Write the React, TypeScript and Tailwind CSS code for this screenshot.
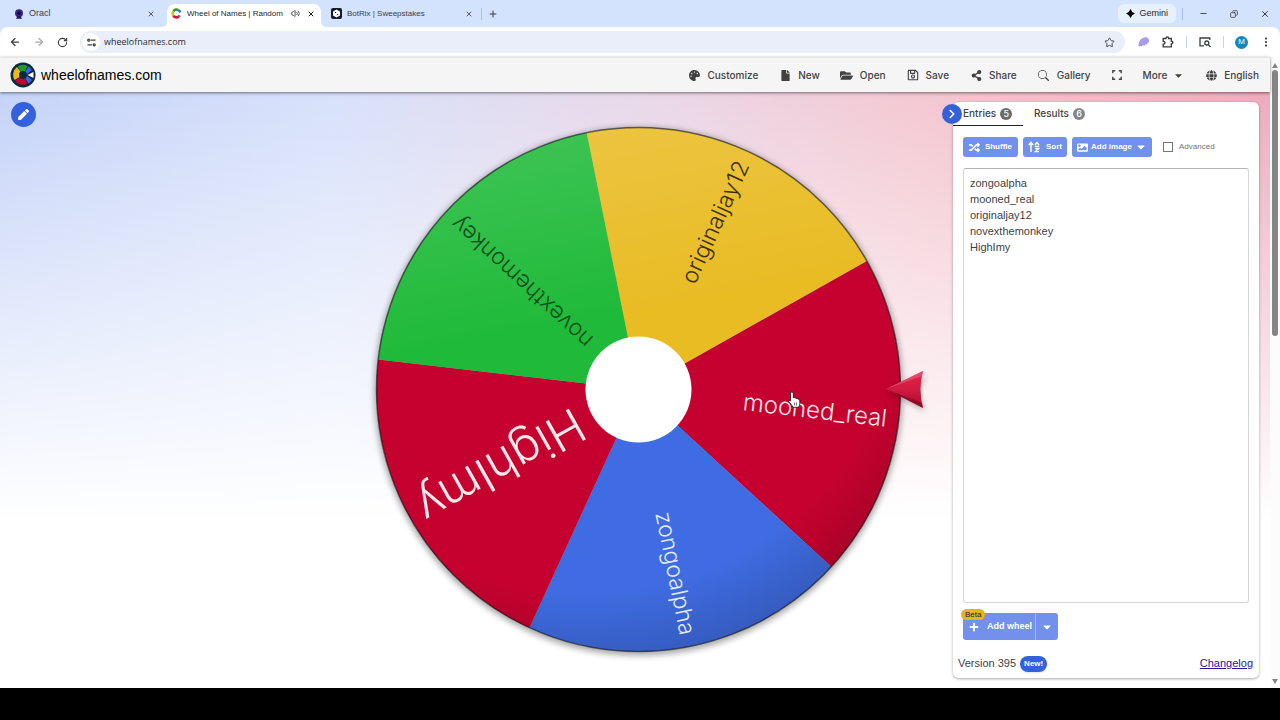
import { useState, type ReactNode } from "react";
import {
  FaCaretDown,
  FaFile,
  FaFolderOpen,
  FaGlobe,
  FaImage,
  FaPalette,
  FaPen,
  FaPlus,
  FaRandom,
  FaRegSave,
  FaShareAlt,
} from "react-icons/fa";
import { BsSearch } from "react-icons/bs";
import {
  ArrowLeft,
  ArrowRight,
  ChevronRight,
  Copy,
  EllipsisVertical,
  Minus,
  Plus,
  RotateCw,
  Star,
  Volume2,
  X,
} from "lucide-react";

const CX = 303.5;
const CY = 297.5;
const RADIUS = 262;
const SLICE = 72;
const ROTATION = -29.4;

const slices = [
  { name: "mooned_real", fill: "#c5022f", ink: "#ffe9e9", size: 24 },
  { name: "zongoalpha", fill: "#3f6ce2", ink: "#e4ebff", size: 23 },
  { name: "HighImy", fill: "#c5022f", ink: "#ffe9e9", size: 48 },
  { name: "novexthemonkey", fill: "#1fba39", ink: "#0d4d1a", size: 23 },
  { name: "originaljay12", fill: "#e9bc24", ink: "#3d3008", size: 23 },
];

const point = (deg: number, r: number) => {
  const rad = (deg * Math.PI) / 180;
  return `${(CX + r * Math.cos(rad)).toFixed(2)} ${(CY + r * Math.sin(rad)).toFixed(2)}`;
};

const Wheel = () => (
  <svg
    viewBox="0 0 600 596"
    className="block w-[600px] shrink"
    role="img"
    aria-label="Wheel"
  >
    <defs>
      <linearGradient id="shine" x1="0.3" y1="0" x2="0.5" y2="1">
        <stop offset="0" stopColor="#fff" stopOpacity="0.14" />
        <stop offset="0.38" stopColor="#fff" stopOpacity="0" />
      </linearGradient>
      <radialGradient id="shade" cx="0.4" cy="0.28" r="0.78">
        <stop offset="0.78" stopColor="#000" stopOpacity="0" />
        <stop offset="1" stopColor="#000" stopOpacity="0.2" />
      </radialGradient>
      <linearGradient id="pointer" x1="0" y1="0" x2="0" y2="1">
        <stop offset="0" stopColor="#e0284e" />
        <stop offset="0.5" stopColor="#d01a40" />
        <stop offset="1" stopColor="#a50c2b" />
      </linearGradient>
      <filter id="soft" x="-10%" y="-10%" width="120%" height="120%">
        <feGaussianBlur stdDeviation="3" />
      </filter>
    </defs>

    <circle cx={CX} cy={CY + 2} r={RADIUS + 2} fill="#000" opacity="0.35" filter="url(#soft)" />
    {slices.map((slice, i) => {
      const start = ROTATION + i * SLICE;
      return (
        <path
          key={slice.name}
          d={`M${CX} ${CY} L${point(start, RADIUS)} A${RADIUS} ${RADIUS} 0 0 1 ${point(start + SLICE, RADIUS)} Z`}
          fill={slice.fill}
        />
      );
    })}
    <circle cx={CX} cy={CY} r={RADIUS} fill="url(#shine)" />
    <circle cx={CX} cy={CY} r={RADIUS} fill="url(#shade)" />
    <circle cx={CX} cy={CY} r={RADIUS} fill="none" stroke="#000" strokeOpacity="0.55" strokeWidth="1.5" />
    {slices.map((slice, i) => (
      <text
        key={slice.name}
        x={CX + 250}
        y={CY}
        textAnchor="end"
        dominantBaseline="central"
        fontSize={slice.size}
        fill={slice.ink}
        transform={`rotate(${ROTATION + (i + 0.5) * SLICE} ${CX} ${CY})`}
        className="font-light [font-family:'Inter','Liberation_Sans',sans-serif]"
      >
        {slice.name}
      </text>
    ))}
    <circle cx={CX} cy={CY} r="53" fill="#fff" />

    {/* pointer */}
    <path d="M553 299 L590 283 L583 300 L590 319 Z" fill="#000" opacity="0.3" filter="url(#soft)" />
    <path d="M551 297 L588 279 Q583 297 588 316 Z" fill="url(#pointer)" />
    <path d="M551 297 L588 279 L587 284 Z" fill="#f06a85" opacity="0.5" />
    <path d="M551 297 L588 316 L587 311 Z" fill="#7d0620" opacity="0.6" />

    {/* hand cursor */}
    <path
      d="M455.500 300.500 q1.500 -1.200 2.800 0.300 v5 q2 -0.800 2.300 0.500 q1.800 -0.500 2.200 0.800 q2 -0.300 2 1.700 v3 q0 2 -1.200 3.500 h-5.500 q-1.500 -3 -4.500 -5.500 q0 -2.200 1.900 -1 Z"
      fill="#fff"
      stroke="#111"
      strokeWidth="0.8"
    />
    <path d="M459.500 310.500 v3 M461.500 310.500 v3" stroke="#111" strokeWidth="0.6" />
  </svg>
);

const Logo = () => (
  <svg viewBox="0 0 26 26" className="size-[26px]" aria-hidden="true">
    <circle cx="13" cy="13" r="12.500" fill="#0c2a3e" />
    <path d="M13 13 L7.500 4.500 A10 10 0 0 1 17.500 4 Z" fill="#17a02f" />
    <path d="M13 13 L4.500 18 A10 10 0 0 1 7 5 Z" fill="#edb916" />
    <path d="M13 13 L17.500 21.800 A10 10 0 0 1 5 18.700 Z" fill="#c5022f" />
    <path d="M13 13 L18.500 4.500 Q20.500 5.500 22 8 L16 13 L22 18 Q20.500 20.500 18.500 21.500 Z" fill="#3369e8" />
    <circle cx="13" cy="13" r="4" fill="#0c2a3e" />
    <path d="M17.500 13 L23.500 10 V16 Z" fill="#fff" />
  </svg>
);

const FullscreenIcon = () => (
  <svg viewBox="0 0 10 10" className="size-[10px]" fill="none" stroke="currentColor" strokeWidth="1.400">
    <path d="M0.800 3.200 V0.800 H3.200 M6.800 0.800 H9.200 V3.200 M9.200 6.800 V9.200 H6.800 M3.200 9.200 H0.800 V6.800" />
  </svg>
);

// two arrows up, with the a/z bars to their right
const SortIcon = () => (
  <svg viewBox="0 0 12 12" className="size-3" fill="none" stroke="currentColor" strokeWidth="1.500" aria-hidden="true">
    <path d="M3 11 V2 M0.800 4 L3 1.500 L5.200 4" />
    <path d="M7 4 L9 1.600 L11 4 M6.800 5.600 H11.200" strokeWidth="1.500" />
    <path d="M7.200 7.600 H10.600 L7.400 10.600 H11" strokeWidth="1.400" />
  </svg>
);

const NavItem = ({ icon, label }: { icon: ReactNode; label: string }) => (
  <button className="flex items-center gap-[7px]">
    <span className="flex w-3 justify-center">{icon}</span>
    {label}
  </button>
);

// curved foot on either side of the active browser tab
const TabFoot = ({ side }: { side: "left" | "right" }) => (
  <svg
    viewBox="0 0 6 6"
    className={side === "left" ? "absolute bottom-0 -left-1.5 size-1.5" : "absolute bottom-0 -right-1.5 size-1.5"}
    aria-hidden="true"
  >
    <path d={side === "left" ? "M6 0 V6 H0 Q6 6 6 0 Z" : "M0 0 V6 H6 Q0 6 0 0 Z"} fill="#fff" />
  </svg>
);

const BrowserChrome = () => (
  <header className="bg-[#d3e2fd] text-[#3c4043]">
    <div className="flex h-[27px] items-center">
      <div className="flex w-[167px] items-center gap-[5px] pr-3 pl-3.5 text-[9px]">
        <svg viewBox="0 0 10 10" className="size-[10px]" aria-hidden="true">
          <circle cx="5" cy="4.200" r="4" fill="#3b1f8f" />
          <circle cx="5" cy="4.200" r="1.800" fill="#120b33" />
          <path d="M2 9.800 L3.500 7 H6.500 L8 9.800 Z" fill="#241463" />
        </svg>
        <span className="flex-1">Oracl</span>
        <button aria-label="Close tab"><X className="size-2" strokeWidth={2.5} /></button>
      </div>
      <div className="relative mt-1 flex h-[23px] w-[154px] items-center gap-[5px] rounded-t-lg bg-white pr-1.5 pb-1 pl-1 text-[#1f1f1f]">
        <TabFoot side="left" />
        <svg viewBox="0 0 12 12" className="size-[11px] shrink-0" fill="none" strokeWidth="2.800" aria-hidden="true">
          <path d="M2.600 3.600 A4.200 4.200 0 0 1 8 2.300" stroke="#17a02f" />
          <path d="M2.600 8.400 A4.200 4.200 0 0 1 2.600 3.600" stroke="#edb916" />
          <path d="M8.500 9.400 A4.200 4.200 0 0 1 2.600 8.400" stroke="#d5112f" />
          <path d="M8 2.300 L10.500 4.500 M9.600 8 L8.500 9.400" stroke="#3369e8" />
        </svg>
        <span className="flex-1 text-[8px] whitespace-nowrap">Wheel of Names | Random</span>
        <Volume2 className="size-[9px] shrink-0" />
        <button aria-label="Close tab" className="ml-0.5"><X className="size-2" strokeWidth={3} /></button>
        <TabFoot side="right" />
      </div>
      <div className="flex w-[161px] items-center gap-[5px] border-r border-[#a8c0ea] pr-2 pl-2.5 text-[8px]">
        <svg viewBox="0 0 11 11" className="size-[11px]" aria-hidden="true">
          <rect width="11" height="11" rx="2" fill="#14192b" />
          <path d="M5.500 1.500 L9 3.500 V7.500 L5.500 9.500 L2 7.500 V3.500 Z" fill="#fff" />
          <path d="M4 4 L5 5 M7 6 L6 7.200" stroke="#14192b" strokeWidth="1" />
        </svg>
        <span className="flex-1">BotRix | Sweepstakes</span>
        <button aria-label="Close tab"><X className="size-2" strokeWidth={2.5} /></button>
      </div>
      <button aria-label="New tab" className="ml-1.5"><Plus className="size-[10px]" strokeWidth={2.5} /></button>
      <div className="ml-auto flex items-center pr-2.5 text-[#1f1f1f]">
        <button className="flex h-[19px] items-center gap-1 rounded-md bg-[#e7f0fd] px-2 text-[9px] font-medium">
          <svg viewBox="0 0 10 10" className="size-[9px]" aria-hidden="true">
            <path d="M5 0 Q6.200 3.800 10 5 Q6.200 6.200 5 10 Q3.800 6.200 0 5 Q3.800 3.800 5 0 Z" />
          </svg>
          Gemini
        </button>
        <span className="mr-4 ml-1.5 h-3 w-px bg-[#a8c0ea]" />
        <div className="flex items-center gap-[22px]">
          <button aria-label="Minimize"><Minus className="size-[9px]" /></button>
          <button aria-label="Restore"><Copy className="size-2 -scale-x-100" /></button>
          <button aria-label="Close window"><X className="size-[10px]" /></button>
        </div>
      </div>
    </div>

    <div className="flex h-[30px] items-center rounded-t-lg bg-white pr-2 pl-[9px]">
      <div className="flex items-center gap-3">
        <button aria-label="Back"><ArrowLeft className="size-3" strokeWidth={2.5} /></button>
        <button aria-label="Forward" className="text-[#a9abae]"><ArrowRight className="size-3" strokeWidth={2.5} /></button>
        <button aria-label="Reload"><RotateCw className="size-[11px]" strokeWidth={2.5} /></button>
      </div>
      <div className="ml-3 flex h-[22px] flex-1 items-center rounded-full bg-[#e9eefa] pr-2.5 pl-0.5">
        <span className="flex size-[18px] items-center justify-center rounded-full bg-white">
          <svg viewBox="0 0 10 10" className="size-[9px]" fill="none" stroke="#3c4043" strokeWidth="1.400" aria-hidden="true">
            <circle cx="2" cy="2.400" r="1.200" />
            <path d="M4.500 2.400 H9.500 M0.500 7.600 H5.500" />
            <circle cx="8" cy="7.600" r="1.200" />
          </svg>
        </span>
        <input
          aria-label="Address"
          defaultValue="wheelofnames.com"
          className="ml-1 min-w-0 flex-1 bg-transparent text-[9px] text-[#2b2d30] outline-none [font-family:'Open_Sans',sans-serif]"
        />
        <button aria-label="Bookmark"><Star className="size-[11px]" strokeWidth={2} /></button>
      </div>
      <div className="flex items-center pl-[13px]">
        <svg viewBox="0 0 12 12" className="size-3" aria-hidden="true">
          <path d="M0.500 10.500 Q0.500 2 7 1.200 Q11.500 1 11 6 Q9.500 6.500 9 8.500 Q7.500 7.500 6.500 10 Q4.500 8.500 3.800 10.500 Q2 9.500 0.500 10.500 Z" fill="#a99be8" />
        </svg>
        <svg viewBox="0 0 12 12" className="ml-3 size-3" fill="none" stroke="#3c4043" strokeWidth="1.400" aria-hidden="true">
          <path d="M1.200 2.500 H4 Q4 0.900 5.300 0.900 Q6.600 0.900 6.600 2.500 H9.300 V5.300 Q10.900 5.300 10.900 6.600 Q10.900 7.900 9.300 7.900 V10.900 H1.200 V8.200 Q3 8 3 6.700 Q3 5.400 1.200 5.200 Z" />
        </svg>
        <span className="ml-3 h-3 w-px bg-[#c5d3ee]" />
        <svg viewBox="0 0 12 12" className="ml-3 size-3" fill="none" stroke="#3c4043" strokeWidth="1.300" aria-hidden="true">
          <path d="M5 9.800 H1 V2 H10.800 V4" />
          <circle cx="7.800" cy="7" r="2" />
          <path d="M9.200 8.600 L11.500 11" />
        </svg>
        <span className="ml-3 h-3 w-px bg-[#c5d3ee]" />
        <span className="ml-[11px] flex size-[13px] items-center justify-center rounded-full bg-[#1288bd] text-[8px] text-white">M</span>
        <button aria-label="Menu" className="ml-3"><EllipsisVertical className="size-3" strokeWidth={2.5} /></button>
      </div>
    </div>
  </header>
);

const entries = ["zongoalpha", "mooned_real", "originaljay12", "novexthemonkey", "HighImy"];

const toolButton =
  "flex h-5 items-center rounded-[3px] bg-[#7191ec] text-[8px] font-bold whitespace-nowrap text-white";

const EntriesPanel = () => {
  const [text, setText] = useState(entries.join("\n"));
  const [advanced, setAdvanced] = useState(false);

  return (
    <aside className="relative flex w-[306px] flex-col rounded-md bg-white shadow-[0_1px_3px_rgba(0,0,0,0.35)]">
      <button
        aria-label="Hide panel"
        className="absolute top-0.5 -left-[11px] flex size-5 items-center justify-center rounded-full bg-[#3460dc] text-white"
      >
        <ChevronRight className="size-3.5" strokeWidth={3} />
      </button>
      <div className="flex h-6 text-[10px] font-medium text-[#424242] [font-family:'Inter','Liberation_Sans',sans-serif]">
        <button className="flex w-[70px] items-center gap-1 border-b border-[#222] pl-2.5">
          Entries
          <span className="flex size-3 items-center justify-center rounded-full bg-[#6b6b6b] text-[9px] text-white">5</span>
        </button>
        <button className="flex items-center gap-1 border-b border-transparent pl-[11px]">
          Results
          <span className="flex size-3 items-center justify-center rounded-full bg-[#858585] text-[9px] text-white">6</span>
        </button>
      </div>

      <div className="flex flex-1 flex-col px-2.5 pt-[11px]">
        <div className="flex items-center gap-[5px]">
          <button className={`${toolButton} w-[55px] justify-between px-1.5`}>
            <FaRandom className="size-[11px]" />
            Shuffle
          </button>
          <button className={`${toolButton} w-11 justify-between px-[5px]`}>
            <SortIcon />
            Sort
          </button>
          <button className={`${toolButton} w-20 justify-between px-[5px]`}>
            <FaImage className="size-[11px]" />
            Add image
            <FaCaretDown className="size-3" />
          </button>
          <label className="ml-1.5 flex items-center gap-1.5 text-[8px] text-[#757575]">
            <input
              type="checkbox"
              checked={advanced}
              onChange={(e) => setAdvanced(e.target.checked)}
              className="size-[10px] appearance-none border border-[#757575] checked:bg-[#3460dc]"
            />
            Advanced
          </label>
        </div>

        <textarea
          aria-label="Entries"
          value={text}
          onChange={(e) => setText(e.target.value)}
          spellCheck={false}
          className="mt-[11px] flex-1 resize-none rounded-[3px] border border-[#d6d6d6] border-t-[#b5b5b5] px-1.5 py-1.5 text-[11px] leading-4 text-[#3f3f3f] outline-none"
        />

        <div className="relative mt-2.5 flex self-start">
          <button className="flex h-[27px] w-[73px] items-center gap-2 rounded-l-[3px] border-r border-[#a6baf3] bg-[#7191ec] pl-1.5 text-[9px] font-bold whitespace-nowrap text-white">
            <FaPlus className="size-[10px] shrink-0" />
            Add wheel
          </button>
          <button aria-label="More wheels" className="flex h-[27px] w-[22px] items-center justify-center rounded-r-[3px] bg-[#7191ec] text-white">
            <FaCaretDown className="size-3" />
          </button>
          <span className="absolute -top-1 -left-0.5 flex h-[11px] items-center rounded-full bg-[#e6b422] px-1 text-[8px] text-[#222]">Beta</span>
        </div>
      </div>

      <div className="mt-[15px] flex h-[17px] items-center pr-1.5 pl-[5px] text-[11px] text-[#424242]">
        Version 395
        <span className="ml-1 flex h-4 items-center rounded-full bg-[#3460dc] px-1 text-[8px] font-bold text-white shadow">New!</span>
        <a href="#changelog" className="ml-auto text-[#2a0fa8] underline">Changelog</a>
      </div>
      <div className="h-1.5" />
    </aside>
  );
};

const App = () => (
  <div className="flex min-h-screen flex-col bg-black [font-family:'Liberation_Sans',sans-serif]">
    <BrowserChrome />
    <div className="flex flex-1 bg-[#fcfcfc]">
      <div className="flex min-w-0 flex-1 flex-col">
        <div className="z-10 flex h-[35px] items-center justify-between border-t border-[#e6e6e6] bg-[#f5f5f5] pr-[11px] pl-2.5 shadow-[0_1px_3px_rgba(0,0,0,0.5)]">
          <a href="#home" className="flex items-center gap-[5px] text-[14px] text-black">
            <Logo />
            wheelofnames.com
          </a>
          <nav className="flex items-center gap-[21px] text-[10px] font-medium text-[#424242] [font-family:'Inter','Liberation_Sans',sans-serif]">
            <NavItem icon={<FaPalette className="size-[11px]" />} label="Customize" />
            <NavItem icon={<FaFile className="size-[11px]" />} label="New" />
            <NavItem icon={<FaFolderOpen className="size-[13px] shrink-0" />} label="Open" />
            <NavItem icon={<FaRegSave className="size-3" />} label="Save" />
            <NavItem icon={<FaShareAlt className="size-[11px]" />} label="Share" />
            <NavItem icon={<BsSearch className="size-[11px]" />} label="Gallery" />
            <button aria-label="Fullscreen"><FullscreenIcon /></button>
            <button className="flex items-center gap-1.5">
              More
              <FaCaretDown className="size-[11px]" />
            </button>
            <NavItem icon={<FaGlobe className="size-[11px]" />} label="English" />
          </nav>
        </div>

        <main className="flex flex-1 items-stretch bg-[linear-gradient(to_bottom,rgba(255,255,255,0)_0%,rgba(255,255,255,0.5)_35%,#fff_72%),linear-gradient(to_right,#c5d3f8_0%,#d7e1fb_26%,#e9d8e8_51%,#f4c8d2_72%,#eeabbd_100%)]">
          <div className="flex-1 pt-2.5 pl-[11px]">
            <button aria-label="Edit title" className="flex size-[25px] items-center justify-center rounded-full bg-[#3460dc] text-white">
              <FaPen className="size-[11px]" />
            </button>
          </div>
          <Wheel />
          <div className="flex flex-1 justify-end pt-2.5 pr-[11px] pb-2.5">
            <EntriesPanel />
          </div>
        </main>
      </div>

      <div className="flex w-[10px] flex-col items-center py-1 text-[#858585]">
        <svg viewBox="0 0 6 5" className="mt-0.5 h-[5px] w-1.5" fill="currentColor"><path d="M3 0 L6 5 H0 Z" /></svg>
        <div className="mt-0.5 h-[266px] w-1.5 rounded-full bg-[#858585]" />
        <svg viewBox="0 0 6 5" className="mt-auto h-[5px] w-1.5" fill="currentColor"><path d="M3 5 L6 0 H0 Z" /></svg>
      </div>
    </div>
    <div className="h-8 bg-black" />
  </div>
);

export default App;
